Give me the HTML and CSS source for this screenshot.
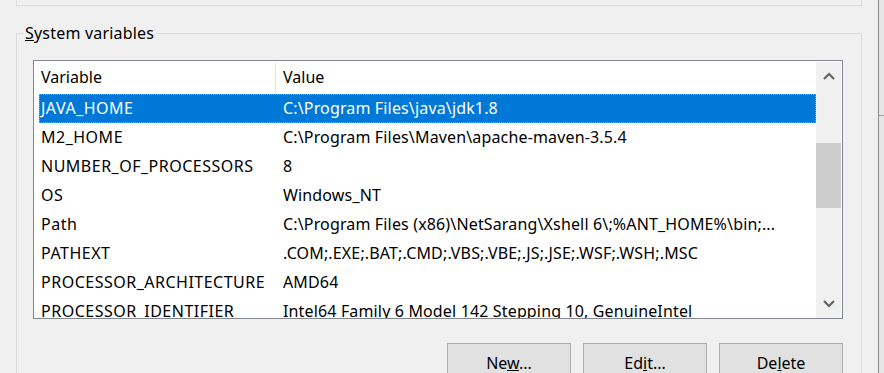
FILE: index.html
```html
<!DOCTYPE html>
<html>
<head>
    <meta charset="utf-8">
    <title>Environment Variables</title>
    <link rel="stylesheet" href="styles.css">
</head>
<body>
    <div class="screen">
        <div class="pane">
            <div class="prev-group"></div>

            <fieldset class="group">
                <legend><u>S</u>ystem variables</legend>
                <div class="group-body">
                    <div class="listbox">
                        <div class="list">
                            <div class="list-head">
                                <div class="head-var">Variable</div>
                                <div class="head-val">Value</div>
                            </div>
                            <div class="row selected"><span class="cell-var">JAVA_HOME</span><span class="cell-val">C:\Program Files\java\jdk1.8</span></div>
                            <div class="row"><span class="cell-var">M2_HOME</span><span class="cell-val">C:\Program Files\Maven\apache-maven-3.5.4</span></div>
                            <div class="row"><span class="cell-var">NUMBER_OF_PROCESSORS</span><span class="cell-val">8</span></div>
                            <div class="row"><span class="cell-var">OS</span><span class="cell-val">Windows_NT</span></div>
                            <div class="row"><span class="cell-var">Path</span><span class="cell-val">C:\Program Files (x86)\NetSarang\Xshell 6\;%ANT_HOME%\bin;...</span></div>
                            <div class="row"><span class="cell-var">PATHEXT</span><span class="cell-val">.COM;.EXE;.BAT;.CMD;.VBS;.VBE;.JS;.JSE;.WSF;.WSH;.MSC</span></div>
                            <div class="row"><span class="cell-var">PROCESSOR_ARCHITECTURE</span><span class="cell-val">AMD64</span></div>
                            <div class="row"><span class="cell-var">PROCESSOR_IDENTIFIER</span><span class="cell-val">Intel64 Family 6 Model 142 Stepping 10, GenuineIntel</span></div>
                        </div>
                        <div class="vscroll">
                            <div class="arrow">
                                <svg width="12" height="8" viewBox="0 0 12 8"><polyline points="1,7 6,2 11,7" fill="none" stroke="#606060" stroke-width="2"/></svg>
                            </div>
                            <div class="track"><div class="thumb"></div></div>
                            <div class="arrow">
                                <svg width="12" height="8" viewBox="0 0 12 8"><polyline points="1,1 6,6 11,1" fill="none" stroke="#606060" stroke-width="2"/></svg>
                            </div>
                        </div>
                    </div>

                    <div class="buttons">
                        <button class="btn">Ne<u>w</u>...</button>
                        <button class="btn">Ed<u>i</u>t...</button>
                        <button class="btn">De<u>l</u>ete</button>
                    </div>
                </div>
            </fieldset>
        </div>
        <div class="edge"><div class="edge-top"></div></div>
    </div>
</body>
</html>
```

FILE: styles.css
```css
html, body {
    margin: 0;
    height: 373px;
    overflow: hidden;
}
body {
    background-color: #f0f0f0;
    font-family: "Noto Sans", "Open Sans", sans-serif;
    font-size: 16px;
    color: #000;
}
.screen {
    display: flex;
    height: 373px;
}
.pane {
    width: 878px;
}
.prev-group {
    margin-left: 16px;
    width: 846px;
    height: 6px;
    box-sizing: border-box;
    border: 1px solid #dcdcdc;
    border-top: none;
}

/* group box */
.group {
    margin: 17px 0 0 16px;
    padding: 0;
    width: 846px;
    box-sizing: border-box;
    border: 1px solid #dcdcdc;
    height: 400px;
}
.group legend {
    margin-left: 6px;
    padding: 0 2px;
    line-height: 20px;
    letter-spacing: 0.2px;
}
.group-body {
    padding: 17px 18px 0 16px;
}

/* list view */
.listbox {
    display: flex;
    height: 259px;
    box-sizing: border-box;
    border: 1px solid #828790;
    padding: 1px 1px 0 0;
    background-color: #fff;
    overflow: hidden;
}
.list {
    flex: 1;
    overflow: hidden;
    white-space: nowrap;
}
.list-head {
    display: flex;
    height: 32px;
    line-height: 31px;
}
.head-var {
    width: 242px;
    box-sizing: border-box;
    padding-left: 7px;
    border-right: 1px solid #e5e5e5;
}
.head-val {
    padding-left: 7px;
}
.row {
    display: flex;
    margin-left: 5px;
    height: 29px;
    box-sizing: border-box;
    border: 1px dotted transparent;
    line-height: 27px;
}
.row.selected {
    background-color: #0078d7;
    color: #fff;
    border-color: #ff8a2a;
}
.cell-var {
    width: 243px;
    flex: none;
    padding-left: 1px;
    box-sizing: border-box;
    overflow: hidden;
    letter-spacing: 0.5px;
}
.cell-val {
    overflow: hidden;
    letter-spacing: 0.15px;
}

/* scrollbar */
.vscroll {
    width: 25px;
    display: flex;
    flex-direction: column;
    background-color: #f0f0f0;
}
.arrow {
    height: 28px;
    display: flex;
    align-items: center;
    justify-content: center;
}
.track {
    flex: 1;
}
.thumb {
    margin-top: 53px;
    height: 65px;
    background-color: #cdcdcd;
}

/* buttons */
.buttons {
    display: flex;
    justify-content: flex-end;
    gap: 12px;
    margin-top: 24px;
}
.btn {
    width: 124px;
    height: 39px;
    box-sizing: border-box;
    border: 1px solid #adadad;
    background-color: #e1e1e1;
    font-family: "Noto Sans", "Open Sans", sans-serif;
    font-size: 16px;
    color: #000;
    padding: 0;
}

/* edge of the window behind */
.edge {
    flex: 1;
    border-left: 1px solid #8a8a8a;
    background-color: #e6e6e6;
}
.edge-top {
    height: 115px;
    border-bottom: 1px solid #a0a0a0;
}
```
